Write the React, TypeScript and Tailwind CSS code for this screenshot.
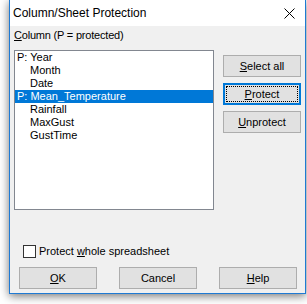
const columns = [
  { name: "Year", protectedCol: true },
  { name: "Month", protectedCol: false },
  { name: "Date", protectedCol: false },
  { name: "Mean_Temperature", protectedCol: true, selected: true },
  { name: "Rainfall", protectedCol: false },
  { name: "MaxGust", protectedCol: false },
  { name: "GustTime", protectedCol: false },
];

function DialogButton({
  children,
  focused = false,
}: {
  children: React.ReactNode;
  focused?: boolean;
}) {
  if (focused) {
    return (
      <button
        type="button"
        className="flex h-[22px] w-[78px] items-center justify-center border-2 border-[#0078d7] bg-[#e1e1e1] p-[1px] text-[11px] leading-none text-black"
      >
        <span className="flex h-full w-full items-center justify-center border border-dotted border-black">
          {children}
        </span>
      </button>
    );
  }
  return (
    <button
      type="button"
      className="flex h-[22px] w-[78px] items-center justify-center border border-[#adadad] bg-[#e1e1e1] text-[11px] leading-none text-black"
    >
      {children}
    </button>
  );
}

export default function App() {
  return (
    <div className="h-[304px] w-[307px] overflow-hidden bg-white font-['Liberation_Sans',Arial,sans-serif]">
      <div className="ml-[9px] flex h-[294px] w-[297px] flex-col border-x border-b border-[#1f7ad3] bg-[#f0f0f0] shadow-[0_2px_9px_rgba(0,0,0,0.55)]">
        {/* title bar */}
        <div className="flex h-[26px] shrink-0 items-center justify-between bg-white pl-[3px] pr-[10px]">
          <span className="text-[12px] text-black">Column/Sheet Protection</span>
          <svg width="11" height="11" viewBox="0 0 11 11" className="text-black">
            <path d="M0.5 0.5 L10.5 10.5 M10.5 0.5 L0.5 10.5" stroke="currentColor" strokeWidth="1" />
          </svg>
        </div>

        <div className="flex flex-col text-[11px] text-black">
          <p className="ml-[4px] mt-[3px] h-[13px] leading-[13px] tracking-[-0.2px]">
            <u>C</u>olumn (P = protected)
          </p>

          <div className="mt-[8px] flex">
            <div className="ml-[4px] h-[160px] w-[200px] border border-[#828790] bg-white">
              {columns.map((col) => (
                <div
                  key={col.name}
                  className={`flex h-[13px] items-center whitespace-pre leading-[13px] ${
                    col.selected ? "bg-[#0078d7] text-white" : "text-black"
                  }`}
                >
                  <span className="pl-[2px]">{col.protectedCol ? "P: " + col.name : ""}</span>
                  {!col.protectedCol && <span className="pl-[13px]">{col.name}</span>}
                </div>
              ))}
            </div>

            <div className="ml-[9px] flex flex-col gap-[6px] pt-[5px]">
              <DialogButton>
                <span>
                  <u>S</u>elect all
                </span>
              </DialogButton>
              <DialogButton focused>
                <span>
                  <u>P</u>rotect
                </span>
              </DialogButton>
              <DialogButton>
                <span>
                  <u>U</u>nprotect
                </span>
              </DialogButton>
            </div>
          </div>

          <label className="ml-[13px] mt-[35px] flex h-[13px] items-center gap-[3px]">
            <span className="h-[13px] w-[13px] border border-[#333333] bg-white" />
            <span>
              Protect <u>w</u>hole spreadsheet
            </span>
          </label>

          <div className="ml-[9px] mt-[9px] flex gap-[22px]">
            <DialogButton>
              <span>
                <u>O</u>K
              </span>
            </DialogButton>
            <DialogButton>Cancel</DialogButton>
            <DialogButton>
              <span>
                <u>H</u>elp
              </span>
            </DialogButton>
          </div>
        </div>
      </div>
    </div>
  );
}
